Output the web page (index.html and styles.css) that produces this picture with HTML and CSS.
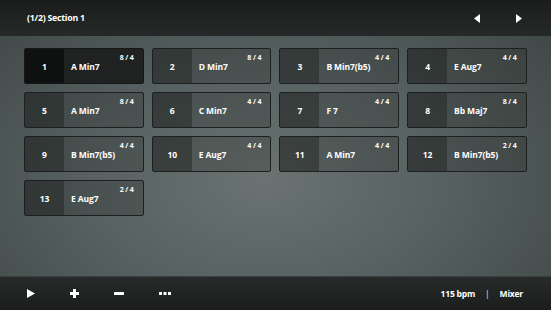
FILE: index.html
```html
<!DOCTYPE html>
<html lang="en">
<head>
    <meta charset="UTF-8">
    <title>Sections</title>
    <link rel="stylesheet" href="styles.css">
</head>
<body>
    <header class="top-bar">
        <div class="section-title">(1/2) Section 1</div>
        <div class="nav">
            <button class="nav-btn" aria-label="Previous">
                <svg width="6" height="9" viewBox="0 0 6 9"><path d="M6 0 L0 4.5 L6 9 Z" fill="#fff"/></svg>
            </button>
            <button class="nav-btn" aria-label="Next">
                <svg width="6" height="9" viewBox="0 0 6 9"><path d="M0 0 L6 4.5 L0 9 Z" fill="#fff"/></svg>
            </button>
        </div>
    </header>

    <main class="grid">
        <div class="bar selected"><span class="num">1</span><span class="chord">A Min7</span><span class="sig">8 / 4</span></div>
        <div class="bar"><span class="num">2</span><span class="chord">D Min7</span><span class="sig">8 / 4</span></div>
        <div class="bar"><span class="num">3</span><span class="chord">B Min7(b5)</span><span class="sig">4 / 4</span></div>
        <div class="bar"><span class="num">4</span><span class="chord">E Aug7</span><span class="sig">4 / 4</span></div>
        <div class="bar"><span class="num">5</span><span class="chord">A Min7</span><span class="sig">8 / 4</span></div>
        <div class="bar"><span class="num">6</span><span class="chord">C Min7</span><span class="sig">4 / 4</span></div>
        <div class="bar"><span class="num">7</span><span class="chord">F 7</span><span class="sig">4 / 4</span></div>
        <div class="bar"><span class="num">8</span><span class="chord">Bb Maj7</span><span class="sig">8 / 4</span></div>
        <div class="bar"><span class="num">9</span><span class="chord">B Min7(b5)</span><span class="sig">4 / 4</span></div>
        <div class="bar"><span class="num">10</span><span class="chord">E Aug7</span><span class="sig">4 / 4</span></div>
        <div class="bar"><span class="num">11</span><span class="chord">A Min7</span><span class="sig">4 / 4</span></div>
        <div class="bar"><span class="num">12</span><span class="chord">B Min7(b5)</span><span class="sig">2 / 4</span></div>
        <div class="bar"><span class="num">13</span><span class="chord">E Aug7</span><span class="sig">2 / 4</span></div>
    </main>

    <footer class="bottom-bar">
        <div class="tools">
            <button class="tool" aria-label="Play">
                <svg width="8" height="9" viewBox="0 0 8 9"><path d="M0 0 L8 4.5 L0 9 Z" fill="#fff"/></svg>
            </button>
            <button class="tool" aria-label="Add">
                <svg width="9" height="9" viewBox="0 0 9 9"><path d="M3 0 H6 V3 H9 V6 H6 V9 H3 V6 H0 V3 H3 Z" fill="#fff"/></svg>
            </button>
            <button class="tool" aria-label="Remove">
                <svg width="10" height="3" viewBox="0 0 10 3"><rect width="10" height="3" rx="0.5" fill="#fff"/></svg>
            </button>
            <button class="tool" aria-label="More">
                <svg width="12" height="3" viewBox="0 0 12 3"><rect x="0" width="3" height="3" fill="#fff"/><rect x="4.5" width="3" height="3" fill="#fff"/><rect x="9" width="3" height="3" fill="#fff"/></svg>
            </button>
        </div>
        <div class="status">
            <span>115 bpm</span>
            <span class="sep">|</span>
            <span>Mixer</span>
        </div>
    </footer>
</body>
</html>
```

FILE: styles.css
```css
:root {
    --bar-line: #3a403f;
    --card-border: #1c201f;
    --text: #ffffff;
}

* {
    box-sizing: border-box;
}

body {
    margin: 0;
    width: 551px;
    height: 310px;
    overflow: hidden;
    display: flex;
    flex-direction: column;
    font-family: "Open Sans", "DejaVu Sans", sans-serif;
    font-weight: 700;
    color: var(--text);
    background: radial-gradient(ellipse 75% 85% at 48% 58%, #6a7372 0%, #566060 45%, #3b4241 100%);
}

button {
    background: none;
    border: none;
    padding: 0;
    cursor: pointer;
    display: flex;
    align-items: center;
    justify-content: center;
}

.top-bar {
    height: 36px;
    flex: none;
    display: flex;
    align-items: center;
    justify-content: space-between;
    padding: 0 29px 0 27px;
    background: linear-gradient(to bottom, #1a1d1c, #252928);
}

.section-title {
    font-size: 8.8px;
    letter-spacing: -0.25px;
}

.nav {
    display: flex;
    gap: 36px;
}

.nav-btn svg {
    display: block;
}

.grid {
    flex: 1;
    display: grid;
    grid-template-columns: repeat(4, 119.7px);
    grid-auto-rows: 36px;
    gap: 8px;
    align-content: start;
    padding: 12px 0 0 24px;
}

.bar {
    position: relative;
    display: flex;
    align-items: center;
    border: 1px solid var(--card-border);
    border-radius: 2px;
    background: rgba(30, 34, 33, 0.25);
    font-size: 8.5px;
    letter-spacing: -0.1px;
}

.bar .num {
    width: 39px;
    align-self: stretch;
    display: flex;
    align-items: center;
    justify-content: center;
    background: rgba(20, 23, 22, 0.38);
}

.bar .chord {
    padding-left: 7px;
}

.bar .sig {
    position: absolute;
    top: 4px;
    right: 9px;
    font-size: 7px;
}

.bar.selected {
    background: #1f2221;
    border-color: #151716;
}

.bar.selected .num {
    background: #0f1110;
}

.bottom-bar {
    height: 34px;
    flex: none;
    display: flex;
    align-items: center;
    justify-content: space-between;
    padding: 0 28px 0 27px;
    border-top: 1px solid var(--bar-line);
    background: linear-gradient(to bottom, #262a29, #1b1e1d);
}

.tools {
    display: flex;
    gap: 35px;
}

.status {
    display: flex;
    gap: 10px;
    font-size: 8.5px;
    letter-spacing: -0.2px;
}

.status .sep {
    font-weight: 400;
    color: #e6e8e7;
}
```
